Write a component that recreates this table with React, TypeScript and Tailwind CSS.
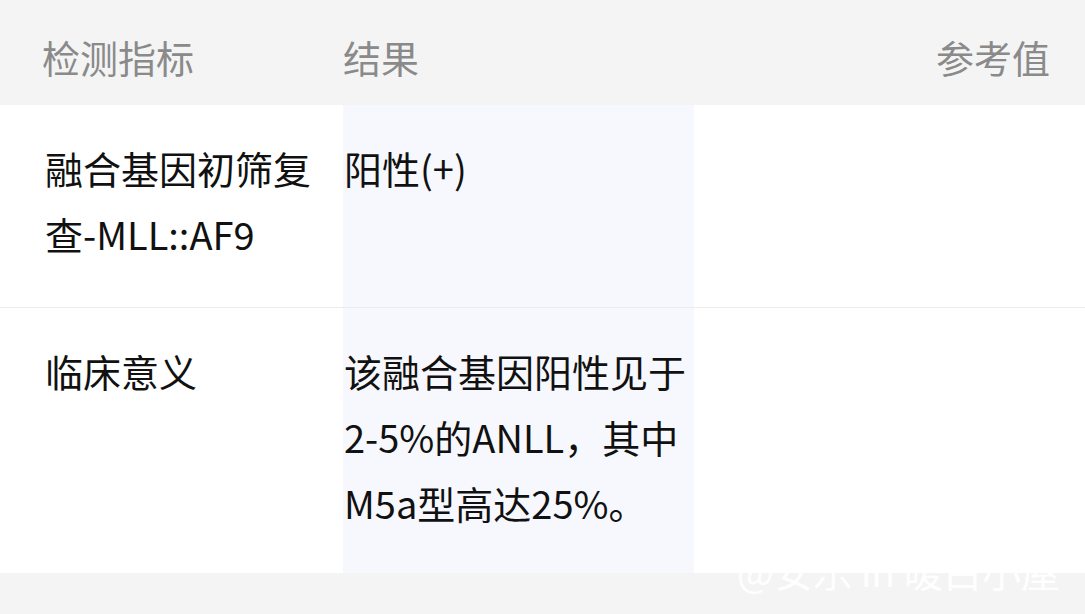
const rows = [
  { name: "融合基因初筛复查-MLL::AF9", result: "阳性(+)", ref: "", pad: "pt-[30px] pb-[40px]" },
  { name: "临床意义", result: "该融合基因阳性见于2-5%的ANLL，其中M5a型高达25%。", ref: "", pad: "pt-[30px] pb-[37px]" },
];

export default function App() {
  return (
    <div className="relative h-[614px] w-[1085px] overflow-hidden bg-[#f4f4f4] font-['Noto_Sans_CJK_SC',sans-serif] text-[38px] leading-[66px]">
      <div className="flex h-[105px] pt-[24px] text-[#8a8a8a]">
        <div className="w-[343px] pl-[42px]">检测指标</div>
        <div className="w-[351px]">结果</div>
        <div className="flex-1 pr-[35px] text-right">参考值</div>
      </div>

      {rows.map((row, i) => (
        <div key={i} className={`flex bg-white text-[#111] ${i > 0 ? "border-t border-[#ececec]" : ""}`}>
          <div className={`w-[343px] pl-[45px] pr-[20px] ${row.pad}`}>{row.name}</div>
          <div className={`w-[351px] bg-[#f7f8fd] pl-[1px] pr-[4px] ${row.pad}`}>{row.result}</div>
          <div className={`flex-1 pr-[35px] text-right ${row.pad}`}>{row.ref}</div>
        </div>
      ))}

      <div className="absolute left-[737px] top-[540px] text-[39px] leading-[60px] text-white/90">@安乐 in 暖白小屋</div>
    </div>
  );
}
